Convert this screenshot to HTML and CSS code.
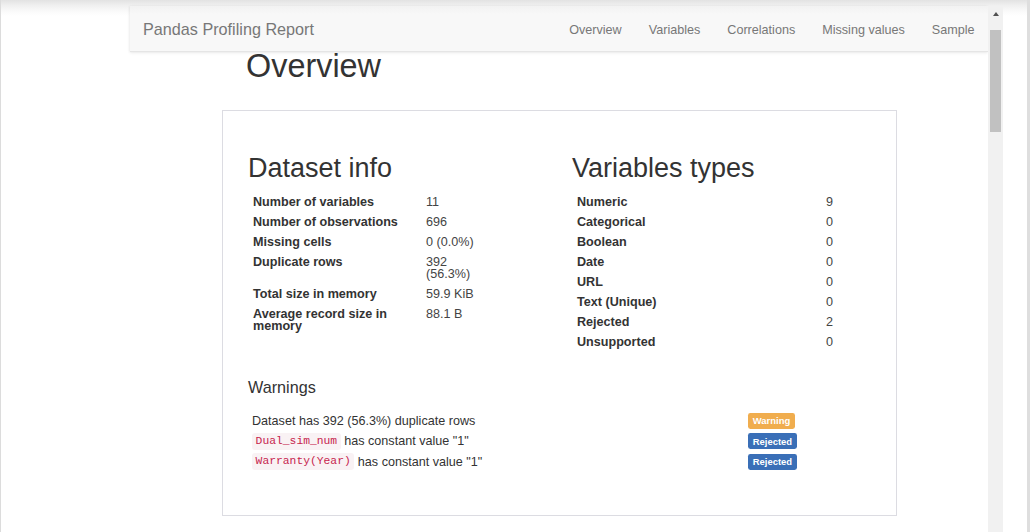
FILE: index.html
```html
<!DOCTYPE html>
<html lang="en">
<head>
<meta charset="utf-8">
<title>Pandas Profiling Report</title>
<link rel="stylesheet" href="styles.css">
</head>
<body>
<div class="frame">
  <div class="main">
    <nav class="navbar">
      <a class="brand" href="#">Pandas Profiling Report</a>
      <ul class="nav">
        <li><a href="#">Overview</a></li>
        <li><a href="#">Variables</a></li>
        <li><a href="#">Correlations</a></li>
        <li><a href="#">Missing values</a></li>
        <li><a href="#">Sample</a></li>
      </ul>
    </nav>
    <h1 class="page-title">Overview</h1>
    <section class="panel">
      <div class="cols">
        <div class="col col-left">
          <h2 class="section-title">Dataset info</h2>
          <table class="stats stats-left">
            <tr><th>Number of variables</th><td>11</td></tr>
            <tr><th>Number of observations</th><td>696</td></tr>
            <tr><th>Missing cells</th><td>0 (0.0%)</td></tr>
            <tr><th>Duplicate rows</th><td>392 (56.3%)</td></tr>
            <tr><th>Total size in memory</th><td>59.9 KiB</td></tr>
            <tr><th>Average record size in memory</th><td>88.1 B</td></tr>
          </table>
        </div>
        <div class="col col-right">
          <h2 class="section-title">Variables types</h2>
          <table class="stats stats-right">
            <tr><th>Numeric</th><td>9</td></tr>
            <tr><th>Categorical</th><td>0</td></tr>
            <tr><th>Boolean</th><td>0</td></tr>
            <tr><th>Date</th><td>0</td></tr>
            <tr><th>URL</th><td>0</td></tr>
            <tr><th>Text (Unique)</th><td>0</td></tr>
            <tr><th>Rejected</th><td>2</td></tr>
            <tr><th>Unsupported</th><td>0</td></tr>
          </table>
        </div>
      </div>
      <h4 class="warnings-title">Warnings</h4>
      <div class="warnings">
        <div class="w-text">Dataset has 392 (56.3%) duplicate rows</div>
        <div class="w-badge"><span class="badge badge-warning">Warning</span></div>
        <div class="w-text"><code>Dual_sim_num</code> has constant value "1"</div>
        <div class="w-badge"><span class="badge badge-primary">Rejected</span></div>
        <div class="w-text"><code>Warranty(Year)</code> has constant value "1"</div>
        <div class="w-badge"><span class="badge badge-primary">Rejected</span></div>
      </div>
    </section>
  </div>
  <div class="scrollbar">
    <div class="sb-arrow"><span class="sb-tri"></span></div>
    <div class="sb-thumb"></div>
  </div>
  <div class="gutter"></div>
  <div class="edge"></div>
</div>
</body>
</html>
```

FILE: styles.css
```css
* { box-sizing: border-box; }

html, body {
  margin: 0;
  padding: 0;
  height: 532px;
  overflow: hidden;
  background: #fff;
}

body {
  font-family: "Liberation Sans", Arial, sans-serif;
  font-size: 12.6px;
  color: #333;
}

.frame {
  display: flex;
  height: 532px;
  border-left: 1px solid #dcdcdc;
  background: linear-gradient(to bottom, #e2e2e2 0, #f1f1f1 6px, #fbfbfb 12px, #fff 16px) no-repeat;
}

.main {
  flex: 1;
  min-width: 0;
}

/* navbar */
.navbar {
  margin: 6px 0 0 129px;
  height: 46px;
  display: flex;
  align-items: center;
  justify-content: space-between;
  padding: 2px 0 0 13px;
  background: linear-gradient(to bottom, #f2f2f2 0, #f8f8f8 8px);
  border-bottom: 1px solid #e5e5e5;
  box-shadow: 0 1px 3px rgba(0, 0, 0, 0.08), -1px 0 2px rgba(0, 0, 0, 0.04);
}

.brand {
  font-size: 16.2px;
  color: #777;
  text-decoration: none;
}

.nav {
  display: flex;
  list-style: none;
  margin: 0;
  padding: 0;
}

.nav a {
  display: block;
  padding: 0 13.5px;
  color: #777;
  text-decoration: none;
  font-size: 12.6px;
}

/* title */
.page-title {
  margin: 0 0 0 245px;
  font-size: 32.4px;
  font-weight: normal;
  line-height: 28px;
  color: #333;
}

/* panel */
.panel {
  margin: 30px 0 0 221px;
  width: 675px;
  border: 1px solid #dcdce2;
  padding: 0 24px 43px 25px;
}

.cols {
  display: grid;
  grid-template-columns: 324px 300px;
}

.section-title {
  margin: 42px 0 0 0;
  font-size: 27px;
  font-weight: normal;
  line-height: 30px;
  color: #333;
}

.stats {
  border-collapse: collapse;
  margin-top: 9px;
}

.stats th,
.stats td {
  padding: 4px 5px;
  line-height: 12px;
  vertical-align: top;
  text-align: left;
  font-size: 12.6px;
  color: #333;
}

.stats th { font-weight: bold; }
.stats td { color: #444; }

.stats-left th { width: 173px; }
.stats-left td { width: 68px; }

.stats-right th { width: 249px; }
.stats-right td { width: 40px; }

.warnings-title {
  margin: 26px 0 0 0;
  font-size: 16.2px;
  font-weight: normal;
  line-height: 18px;
  color: #333;
}

.warnings {
  margin: 15px 0 0 -1px;
  display: grid;
  grid-template-columns: 1fr 124px;
  grid-auto-rows: 20.25px;
}

.w-text,
.w-badge {
  display: flex;
  align-items: center;
}

.w-text {
  padding-left: 5px;
  white-space: pre;
}

code {
  font-family: "Liberation Mono", "Courier New", monospace;
  font-size: 11.34px;
  color: #c7254e;
  background: #f9f2f4;
  padding: 2px 3.6px;
  border-radius: 3px;
  line-height: 12.7px;
}

.badge {
  display: inline-block;
  font-size: 9.45px;
  font-weight: bold;
  line-height: 1;
  color: #fff;
  padding: 3.2px 4.8px 3.4px;
  border-radius: 2.4px;
  white-space: nowrap;
}

.badge-warning { background: #f0ad4e; }
.badge-primary { background: #3a6fb7; }

/* fake scrollbar */
.scrollbar {
  width: 15px;
  margin-top: 6px;
  background: #f1f1f1;
  flex-shrink: 0;
}

.sb-arrow {
  height: 18px;
  display: flex;
  justify-content: center;
  padding-top: 6px;
}

.sb-tri {
  width: 0;
  height: 0;
  border-left: 3.5px solid transparent;
  border-right: 3.5px solid transparent;
  border-bottom: 4px solid #505050;
}

.sb-thumb {
  margin: 6px 2px 0;
  height: 102px;
  background: #c1c1c1;
}

.gutter {
  width: 24px;
  flex-shrink: 0;
}

.edge {
  width: 3px;
  flex-shrink: 0;
  background: #dedede;
}
```
